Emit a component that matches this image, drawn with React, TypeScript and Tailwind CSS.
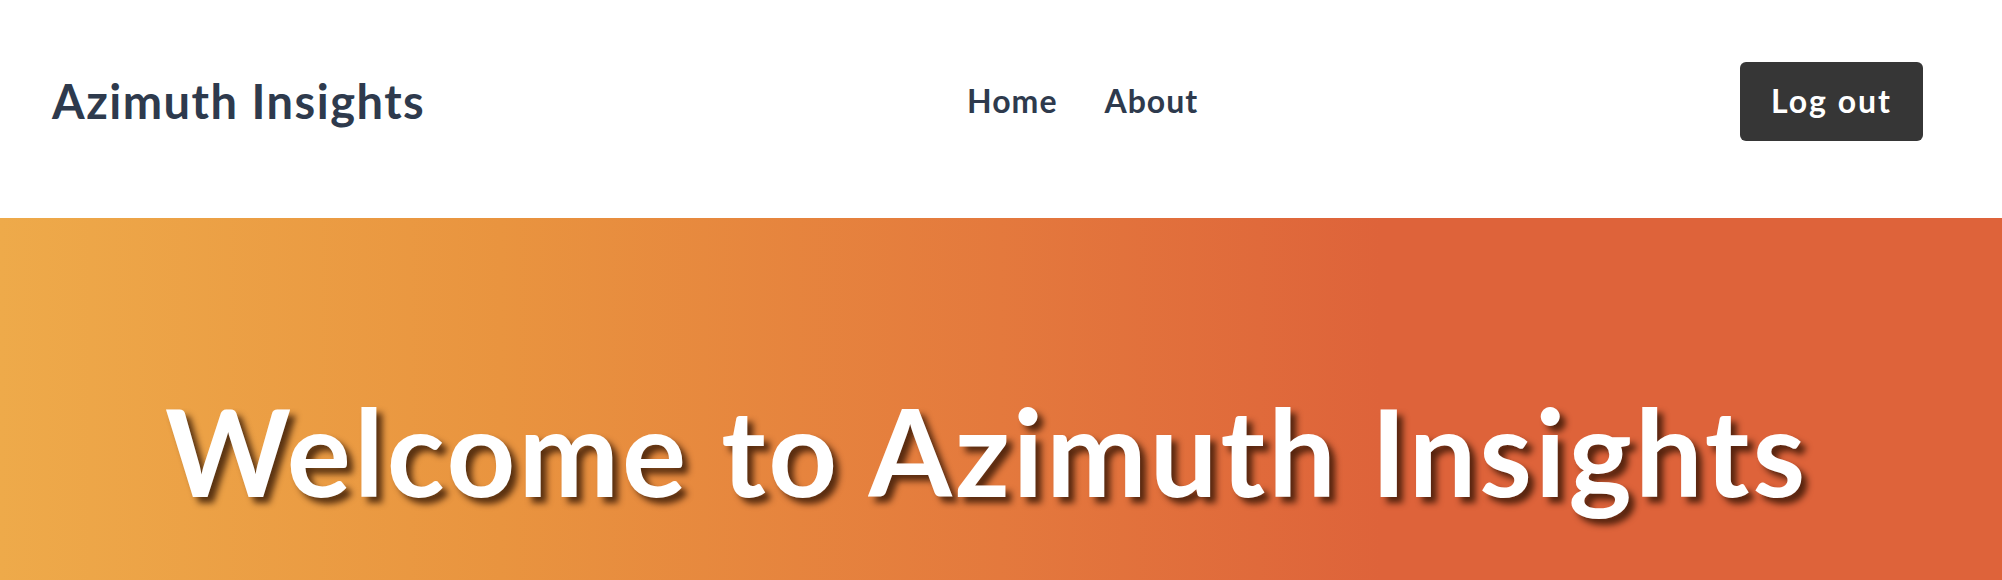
export default function App() {
  return (
    <div className="min-h-screen bg-white" style={{ fontFamily: "Lato, 'Open Sans', sans-serif" }}>
      <header className="h-[218px] flex items-center justify-between pl-[52px] pr-[79px] pb-[16px]">
        <a href="#" className="text-[47px] font-bold text-[#2e3a4d] tracking-[1.5px]">
          Azimuth Insights
        </a>
        <nav className="flex items-center gap-[47px] text-[32px] font-bold text-[#2e3a4d] tracking-[1px]">
          <a href="#">Home</a>
          <a href="#">About</a>
        </nav>
        <button className="w-[183px] h-[79px] rounded-[6px] bg-[#363636] text-white text-[32px] font-bold tracking-[2px]">
          Log out
        </button>
      </header>

      <section className="h-[362px] overflow-hidden bg-[linear-gradient(90deg,#eeaa4a_0%,#e9943f_25%,#e4793d_50%,#de633a_69%,#de633a_100%)]">
        <h1 className="pl-[165px] pt-[173px] text-[120px] leading-none font-bold text-white whitespace-nowrap tracking-[3px] [text-shadow:6px_6px_6px_rgba(40,15,0,0.75)]">
          Welcome to Azimuth Insights
        </h1>
      </section>
    </div>
  );
}
